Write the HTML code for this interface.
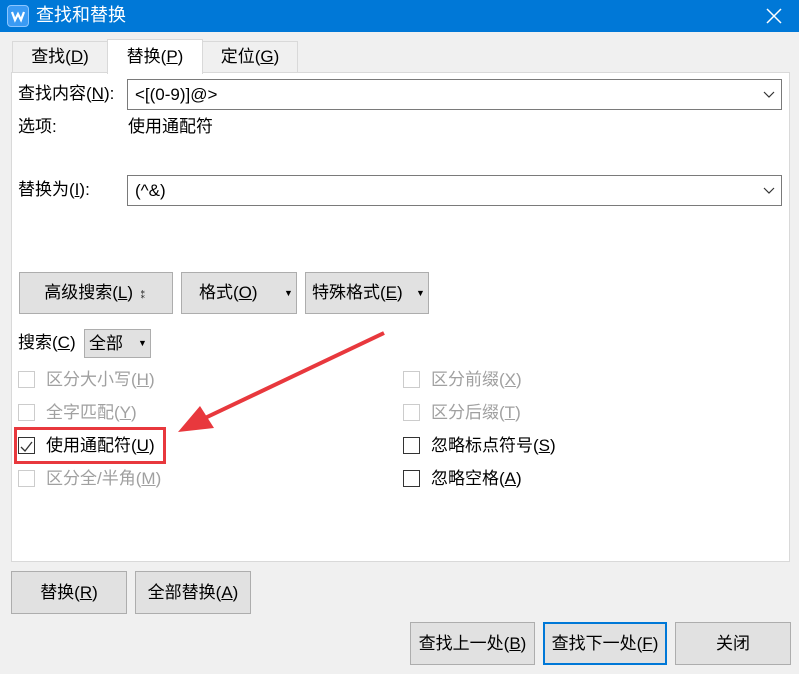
<!DOCTYPE html>
<html><head><meta charset="utf-8"><style>
*{box-sizing:border-box;margin:0;padding:0}
body{width:799px;height:674px;background:#f0f0f0;position:relative;overflow:hidden;font-family:"Liberation Sans","Noto Sans CJK SC",sans-serif;font-size:17px;color:#000;line-height:22px}
.a{position:absolute;white-space:nowrap}
.title{left:0;top:0;width:799px;height:32px;background:#0078d7;color:#fff}
.tab{top:41px;height:31px;border:1px solid #d9d9d9;border-bottom:none;background:#f0f0f0;text-align:center;line-height:30px}
.panel{left:11px;top:72px;width:779px;height:490px;background:#fff;border:1px solid #d9d9d9}
.inp{height:31px;border:1px solid #7a7a7a;background:#fff;line-height:29px;padding-left:7px}
.btn{background:#e1e1e1;border:1px solid #adadad;text-align:center}
.cb{width:17px;height:17px;border:1px solid #333;background:#fff}
.cb.d{border-color:#ccc}
.g{color:#a0a0a0}
u{text-decoration:underline}
.chev{position:absolute;right:6px;top:9px}
.ar{position:absolute;top:0;font-size:9px}
</style></head><body>
<div class="a title">
<div class="a" style="left:7px;top:5px;width:22px;height:22px;background:#3a9bf4;border-radius:4px;border:1px solid #8cc6ff"><svg width="20" height="20" viewBox="0 0 20 20"><path d="M4 6 L7 14 L10 8 L13 14 L16 6" fill="none" stroke="#fff" stroke-width="2.2"/></svg></div>
<div class="a" style="left:36px;top:4px;font-size:18px">查找和替换</div>
<svg class="a" style="left:765px;top:7px" width="18" height="18"><path d="M2 2L16 16M16 2L2 16" stroke="#fff" stroke-width="1.5"/></svg>
</div>
<div class="a tab" style="left:12px;width:96px">查找(<u>D</u>)</div>
<div class="a tab" style="left:202px;width:96px">定位(<u>G</u>)</div>
<div class="a panel"></div>
<div class="a tab" style="left:107px;top:39px;width:96px;height:35px;background:#fff;z-index:2;line-height:34px">替换(<u>P</u>)</div>
<div class="a" style="left:18px;top:83px">查找内容(<u>N</u>):</div>
<div class="a inp" style="left:127px;top:79px;width:655px">&lt;[(0-9)]@&gt;<svg class="chev" width="12" height="12"><path d="M1 3L6 8L11 3" fill="none" stroke="#333" stroke-width="1.2"/></svg></div>
<div class="a" style="left:18px;top:116px">选项:</div>
<div class="a" style="left:128px;top:116px">使用通配符</div>
<div class="a" style="left:18px;top:179px">替换为(<u>I</u>):</div>
<div class="a inp" style="left:127px;top:175px;width:655px">(^&amp;)<svg class="chev" width="12" height="12"><path d="M1 3L6 8L11 3" fill="none" stroke="#333" stroke-width="1.2"/></svg></div>
<div class="a btn" style="left:19px;top:272px;width:154px;height:42px;line-height:40px">高级搜索(<u>L</u>) <span style="font-size:10px">⁑</span></div>
<div class="a btn" style="left:181px;top:272px;width:116px;height:42px;line-height:40px;text-align:left;padding-left:17px">格式(<u>O</u>)<span class="ar" style="left:102px">▼</span></div>
<div class="a btn" style="left:305px;top:272px;width:124px;height:42px;line-height:40px;text-align:left;padding-left:6px">特殊格式(<u>E</u>)<span class="ar" style="left:110px">▼</span></div>
<div class="a" style="left:18px;top:332px">搜索(<u>C</u>)</div>
<div class="a btn" style="left:84px;top:329px;width:67px;height:29px;line-height:27px;text-align:left;padding-left:4px">全部<span class="ar" style="left:53px">▼</span></div>
<div class="a cb d" style="left:18px;top:371px"></div><div class="a g" style="left:46px;top:369px">区分大小写(<u>H</u>)</div>
<div class="a cb d" style="left:18px;top:404px"></div><div class="a g" style="left:46px;top:402px">全字匹配(<u>Y</u>)</div>
<div class="a cb" style="left:18px;top:437px"><svg width="15" height="15"><path d="M2 8L6 12L13 3" fill="none" stroke="#333" stroke-width="1.3"/></svg></div><div class="a" style="left:46px;top:435px">使用通配符(<u>U</u>)</div>
<div class="a cb d" style="left:18px;top:470px"></div><div class="a g" style="left:46px;top:468px">区分全/半角(<u>M</u>)</div>
<div class="a cb d" style="left:403px;top:371px"></div><div class="a g" style="left:431px;top:369px">区分前缀(<u>X</u>)</div>
<div class="a cb d" style="left:403px;top:404px"></div><div class="a g" style="left:431px;top:402px">区分后缀(<u>T</u>)</div>
<div class="a cb" style="left:403px;top:437px"></div><div class="a" style="left:431px;top:435px">忽略标点符号(<u>S</u>)</div>
<div class="a cb" style="left:403px;top:470px"></div><div class="a" style="left:431px;top:468px">忽略空格(<u>A</u>)</div>
<div class="a" style="left:14px;top:427px;width:152px;height:37px;border:3px solid #e8383d"></div>
<svg class="a" style="left:0;top:0" width="799" height="674"><path d="M384 333L205 418" stroke="#e8383d" stroke-width="4"/><path d="M178 432L200 406L214 428Z" fill="#e8383d"/></svg>
<div class="a btn" style="left:11px;top:571px;width:116px;height:43px;line-height:41px">替换(<u>R</u>)</div>
<div class="a btn" style="left:135px;top:571px;width:116px;height:43px;line-height:41px">全部替换(<u>A</u>)</div>
<div class="a btn" style="left:410px;top:622px;width:125px;height:43px;line-height:41px">查找上一处(<u>B</u>)</div>
<div class="a btn" style="left:543px;top:622px;width:124px;height:43px;line-height:39px;border:2px solid #0078d7">查找下一处(<u>F</u>)</div>
<div class="a btn" style="left:675px;top:622px;width:116px;height:43px;line-height:41px">关闭</div>
</body></html>
